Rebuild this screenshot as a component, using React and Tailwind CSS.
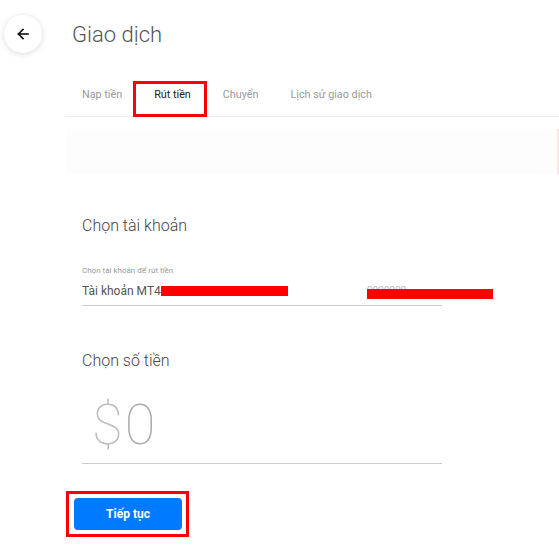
import React from 'react';

const tabs = ['Nạp tiền', 'Rút tiền', 'Chuyển', 'Lịch sử giao dịch'];

const BackButton = () => (
  <button className="w-[38px] h-[38px] rounded-full bg-white shadow-[0_1px_6px_rgba(0,0,0,0.15)] flex items-center justify-center">
    <svg width="12" height="12" viewBox="0 0 12 12" fill="none" stroke="#111" strokeWidth="1.6" strokeLinecap="square">
      <path d="M11 6H1.5" />
      <path d="M6 1.5L1.5 6L6 10.5" />
    </svg>
  </button>
);

const App = () => {
  return (
    <div className="relative w-[559px] h-[550px] bg-white overflow-hidden font-['Roboto',sans-serif]">
      <div className="flex">
        {/* Left rail */}
        <div className="w-[66px] shrink-0 pt-[15px] pl-[4px]">
          <BackButton />
        </div>

        {/* Main column */}
        <div className="flex-1">
          <h1 className="pt-[21px] pl-[6px] text-[22px] leading-[28px] font-light text-[#555]">Giao dịch</h1>

          <nav className="mt-[22px] h-[46px] pt-[3px] flex items-center border-b border-[#ececec]">
            {tabs.map((tab) => (
              <span
                key={tab}
                className={
                  tab === 'Rút tiền'
                    ? 'px-4 text-[10.8px] text-[#222]'
                    : 'px-4 text-[10.8px] text-[#999]'
                }
              >
                {tab}
              </span>
            ))}
          </nav>

          <div className="mt-[12px] h-[45px] bg-[#fdfdfd] border-r-2 border-[#fbe6e6]" />

          {/* Form */}
          <div className="px-4 pt-[42px]">
            <h2 className="text-[16px] leading-[20px] font-light text-[#444]">Chọn tài khoản</h2>

            <div className="mt-[30px] w-[360px] border-b border-[#ccc] pb-[6px]">
              <p className="text-[8px] leading-[10px] text-[#999]">Chọn tài khoản để rút tiền</p>
              <div className="mt-[7px] flex items-center text-[12px] leading-[16px] text-[#555]">
                <span>Tài khoản MT4</span>
                <span className="inline-block w-[127px] h-[10px] bg-[#ff0000]" />
                <span className="relative ml-[79px] text-[#bbb] text-[10px]">
                  0000000
                  <span className="absolute left-0 top-[6px] w-[126px] h-[10px] bg-[#ff0000]" />
                </span>
              </div>
            </div>

            <h2 className="mt-[45px] text-[16px] leading-[20px] font-light text-[#444]">Chọn số tiền</h2>

            <div className="mt-[22px] w-[360px] border-b border-[#ccc] pb-[6px]">
              <div className="pl-[10px] text-[56px] leading-[64px] font-thin text-[#bdbdbd] tracking-[2px]">
                $<span className="text-[#aaa]">0</span>
              </div>
            </div>

            <div className="relative mt-[34px] w-[108px]">
              <button className="w-[108px] h-[32px] ml-[-8px] rounded-[4px] bg-[#007bff] text-white text-[12px] font-bold">
                Tiếp tục
              </button>
              <span className="absolute left-[-16px] top-[-7px] w-[123px] h-[46px] border-[3px] border-[#ff0000]" />
            </div>
          </div>
        </div>
      </div>

      {/* Annotation box around the active tab */}
      <span className="absolute left-[133px] top-[81px] w-[74px] h-[36px] border-[3px] border-[#ff0000]" />
    </div>
  );
};

export default App;
